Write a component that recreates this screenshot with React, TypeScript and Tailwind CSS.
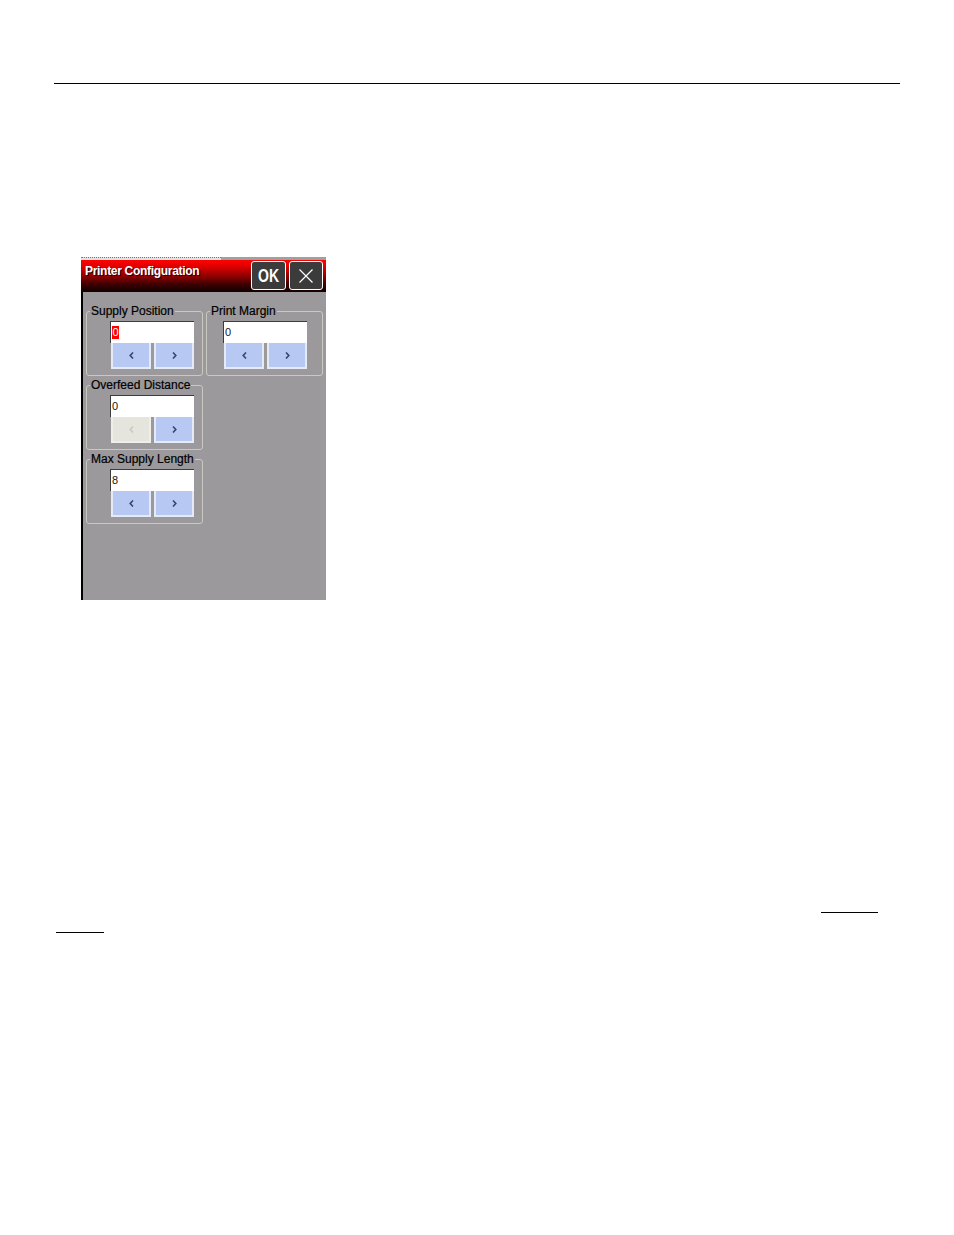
import React from "react";

function Chevron({ dir, disabled }: { dir: "l" | "r"; disabled?: boolean }) {
  return (
    <svg width="5" height="7" viewBox="0 0 5 7">
      <polyline
        points={dir === "l" ? "4,0.5 1.2,3.5 4,6.5" : "1,0.5 3.8,3.5 1,6.5"}
        fill="none"
        stroke={disabled ? "#c9c9c0" : "#34466e"}
        strokeWidth="1.6"
      />
    </svg>
  );
}

function SpinBtn({ dir, disabled }: { dir: "l" | "r"; disabled?: boolean }) {
  return (
    <div
      className={
        disabled
          ? "w-[40px] h-[26px] flex items-center justify-center bg-[#e6e5dd] border-x-2 border-b-2 border-[#efefe9]"
          : "w-[40px] h-[26px] flex items-center justify-center bg-[#b7c9f2] border-x-2 border-b-2 border-[#e4eaf6]"
      }
    >
      <Chevron dir={dir} disabled={disabled} />
    </div>
  );
}

function Group({
  label,
  value,
  selected,
  offset,
  leftDisabled,
}: {
  label: string;
  value: string;
  selected?: boolean;
  offset: string;
  leftDisabled?: boolean;
}) {
  return (
    <fieldset className="border border-[#c9c9c1] rounded-[3px] m-0 p-0 h-[71px]">
      <legend className="ml-[3px] px-[1px] text-[12px] leading-[12px] text-black [-webkit-text-stroke:0.2px_black]">
        {label}
      </legend>
      <div className={offset + " mt-[4px]"}>
        <div className="w-[84px] h-[22px] bg-white border-t border-l border-[#3c3c3c] flex items-center pl-[1px] text-[11px] leading-[13px]">
          {selected ? (
            <span className="bg-[#ff0000] text-white px-[0.5px]">{value}</span>
          ) : (
            <span className="text-[#141414]">{value}</span>
          )}
        </div>
        <div className="flex gap-[3px] w-[84px] pl-[1px]">
          <SpinBtn dir="l" disabled={leftDisabled} />
          <SpinBtn dir="r" />
        </div>
      </div>
    </fieldset>
  );
}

export default function App() {
  return (
    <div
      className="w-[954px] h-[1235px] bg-white overflow-hidden"
      style={{ fontFamily: '"Liberation Sans", Arial, sans-serif' }}
    >
      <div className="h-[83px]" />
      <div className="ml-[54px] w-[846px] h-px bg-black" />
      <div className="h-[173px]" />

      <div className="ml-[81px] w-[245px] h-[343px] flex flex-col">
        <div className="flex h-[3px]">
          <div className="w-[140px] bg-[#e2e2e2] border-t border-dotted border-[#7a7a7a]" />
          <div className="flex-1 bg-[#a0a0a0]" />
        </div>
        <div className="h-[32px] flex items-start bg-[linear-gradient(to_bottom,#ff0000_0%,#e00000_20%,#900000_50%,#400000_75%,#100000_100%)]">
          <span className="pl-[4px] pt-[4px] text-[12px] leading-[14px] font-bold text-white tracking-[-0.3px] [text-shadow:1px_1px_0_#300000]">
            Printer Configuration
          </span>
          <div className="ml-auto mt-[1px] mr-[3px] flex gap-[3px]">
            <div className="w-[35px] h-[29px] rounded-[3px] border border-white bg-[#3b3b3b] flex items-center justify-center">
              <span className="text-white font-bold text-[18px] leading-none scale-x-[0.78] inline-block">OK</span>
            </div>
            <div className="w-[34px] h-[29px] rounded-[3px] border border-white bg-[#3b3b3b] flex items-center justify-center">
              <svg width="16" height="16" viewBox="0 0 16 16">
                <path d="M1.5 1.5 L14.5 14.5 M14.5 1.5 L1.5 14.5" stroke="#ffffff" strokeWidth="1.2" />
              </svg>
            </div>
          </div>
        </div>
        <div className="flex-1 bg-[#9c999c] border-l-2 border-black pl-[3px] pt-[13px]">
          <div className="grid grid-cols-[117px_117px] gap-x-[3px] gap-y-[3px]">
            <Group label="Supply Position" value="0" selected offset="ml-[23px]" />
            <Group label="Print Margin" value="0" offset="ml-[16px]" />
            <Group label="Overfeed Distance" value="0" offset="ml-[23px]" leftDisabled />
            <div />
            <Group label="Max Supply Length" value="8" offset="ml-[23px]" />
          </div>
        </div>
      </div>

      <div className="h-[312px]" />
      <div className="ml-[821px] w-[57px] h-px bg-black" />
      <div className="h-[19px]" />
      <div className="ml-[56px] w-[48px] h-px bg-black" />
    </div>
  );
}
